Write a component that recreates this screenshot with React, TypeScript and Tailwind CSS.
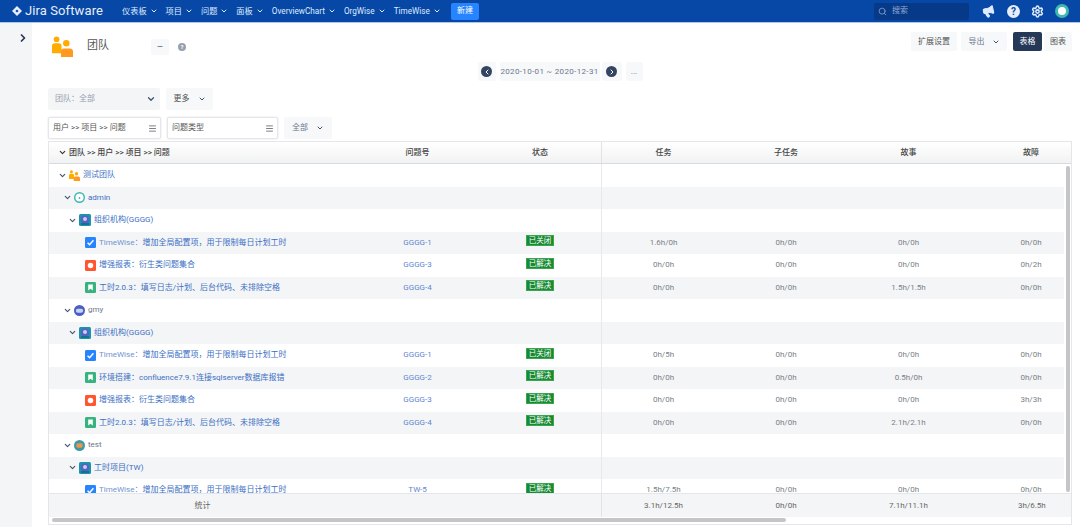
import { ChevronDown, ChevronLeft, ChevronRight, Menu, Search, Settings, Megaphone } from "lucide-react";

type Kind = "task" | "bug" | "story";

interface Row {
  level: number;
  label: string;
  prefix?: string;
  icon?: "team" | "admin" | "gmy" | "test" | "project";
  kind?: Kind;
  issue?: string;
  status?: string;
  values?: string[];
  muted?: boolean;
}

const navItems = ["仪表板", "项目", "问题", "面板", "OverviewChart", "OrgWise", "TimeWise"];

const rows: Row[] = [
  { level: 0, label: "测试团队", icon: "team" },
  { level: 1, label: "admin", icon: "admin" },
  { level: 2, label: "组织机构(GGGG)", icon: "project" },
  { level: 3, kind: "task", prefix: "TimeWise：", label: "增加全局配置项，用于限制每日计划工时", issue: "GGGG-1", status: "已关闭", values: ["1.6h/0h", "0h/0h", "0h/0h", "0h/0h"] },
  { level: 3, kind: "bug", label: "增强报表：衍生类问题集合", issue: "GGGG-3", status: "已解决", values: ["0h/0h", "0h/0h", "0h/0h", "0h/2h"] },
  { level: 3, kind: "story", label: "工时2.0.3：填写日志/计划、后台代码、未排除空格", issue: "GGGG-4", status: "已解决", values: ["0h/0h", "0h/0h", "1.5h/1.5h", "0h/0h"] },
  { level: 1, label: "gmy", icon: "gmy", muted: true },
  { level: 2, label: "组织机构(GGGG)", icon: "project" },
  { level: 3, kind: "task", prefix: "TimeWise：", label: "增加全局配置项，用于限制每日计划工时", issue: "GGGG-1", status: "已关闭", values: ["0h/5h", "0h/0h", "0h/0h", "0h/0h"] },
  { level: 3, kind: "story", label: "环境搭建：confluence7.9.1连接sqlserver数据库报错", issue: "GGGG-2", status: "已解决", values: ["0h/0h", "0h/0h", "0.5h/0h", "0h/0h"] },
  { level: 3, kind: "bug", label: "增强报表：衍生类问题集合", issue: "GGGG-3", status: "已解决", values: ["0h/0h", "0h/0h", "0h/0h", "3h/3h"] },
  { level: 3, kind: "story", label: "工时2.0.3：填写日志/计划、后台代码、未排除空格", issue: "GGGG-4", status: "已解决", values: ["0h/0h", "0h/0h", "2.1h/2.1h", "0h/0h"] },
  { level: 1, label: "test", icon: "test", muted: true },
  { level: 2, label: "工时项目(TW)", icon: "project" },
  { level: 3, kind: "task", prefix: "TimeWise：", label: "增加全局配置项，用于限制每日计划工时", issue: "TW-5", status: "已解决", values: ["1.5h/7.5h", "0h/0h", "0h/0h", "0h/0h"] },
];

const indent: Record<number, string> = {
  0: "pl-[9px]",
  1: "pl-[14px]",
  2: "pl-[19px]",
  3: "pl-[36px]",
};

function TeamIcon({ size }: { size: number }) {
  return (
    <svg width={size} height={size} viewBox="0 0 22 22" className="shrink-0">
      <circle cx="4.8" cy="3.4" r="3" fill="#ffab00" />
      <path d="M0 18v-7.5a3 3 0 0 1 3-3h4a3 3 0 0 1 3 3V18z" fill="#ffab00" />
      <circle cx="15" cy="7.6" r="3.4" fill="#ffab00" />
      <path d="M9.4 22v-6a3.2 3.2 0 0 1 3.2-3h5.8a3.4 3.4 0 0 1 3.6 3v6z" fill="#ff991f" />
    </svg>
  );
}

function Avatar({ type }: { type: "admin" | "gmy" | "test" }) {
  const ring = type === "admin" ? "#3fb8af" : type === "gmy" ? "#4a5fc1" : "#3f9aa8";
  return (
    <svg width="11" height="11" viewBox="0 0 12 12" className="shrink-0">
      <circle cx="6" cy="6" r="6" fill={ring} />
      {type === "admin" && <circle cx="6" cy="6" r="4.4" fill="#fff" />}
      {type === "admin" && <circle cx="6" cy="6.5" r="1" fill="#3fb8af" />}
      {type === "gmy" && <rect x="2" y="4" width="8" height="4.5" rx="2.2" fill="#c7d2f5" />}
      {type === "test" && <rect x="2.5" y="3.5" width="7" height="5" rx="2" fill="#f0954a" />}
    </svg>
  );
}

function ProjectIcon() {
  return (
    <svg width="12" height="12" viewBox="0 0 12 12" className="shrink-0">
      <rect width="12" height="12" rx="1.5" fill="#1c93ad" />
      <circle cx="6" cy="5.4" r="4" fill="#5a5fc4" />
      <circle cx="6" cy="5" r="2" fill="#c9cdf2" />
      <rect x="2" y="9.4" width="8" height="1.2" fill="#0b5f78" />
    </svg>
  );
}

function KindIcon({ kind }: { kind: Kind }) {
  if (kind === "task") {
    return (
      <svg width="11" height="11" viewBox="0 0 12 12" className="shrink-0">
        <rect width="12" height="12" rx="1.5" fill="#2684ff" />
        <path d="M2.8 6.2 5 8.4l4.2-4.8" stroke="#fff" strokeWidth="1.6" fill="none" />
      </svg>
    );
  }
  if (kind === "bug") {
    return (
      <svg width="11" height="11" viewBox="0 0 12 12" className="shrink-0">
        <rect width="12" height="12" rx="1.5" fill="#ff5630" />
        <circle cx="6" cy="6" r="3" fill="#fff" />
      </svg>
    );
  }
  return (
    <svg width="11" height="11" viewBox="0 0 12 12" className="shrink-0">
      <rect width="12" height="12" rx="1.5" fill="#36b37e" />
      <path d="M3.5 2.8h5v6.4L6 7.4 3.5 9.2z" fill="#fff" />
    </svg>
  );
}

function RowIcon({ row }: { row: Row }) {
  if (row.kind) return <KindIcon kind={row.kind} />;
  if (row.icon === "team") return <TeamIcon size={11} />;
  if (row.icon === "project") return <ProjectIcon />;
  if (row.icon) return <Avatar type={row.icon} />;
  return null;
}

function GhostButton({ children, className = "" }: { children: React.ReactNode; className?: string }) {
  return (
    <div className={`flex items-center justify-center rounded-[2px] bg-[#f7f8f9] text-[8px] text-[#6b778c] ${className}`}>
      {children}
    </div>
  );
}

function TreeSelect({ label, className }: { label: string; className: string }) {
  return (
    <div className={`flex h-[22px] items-center justify-between rounded-[2px] border border-[#e4e6ea] bg-white pl-[4px] pr-[3px] text-[8px] text-[#555] shadow-[0_0_2px_#ddd] ${className}`}>
      <span>{label}</span>
      <Menu size={9} strokeWidth={2} className="text-[#555]" />
    </div>
  );
}

export default function App() {
  return (
    <div className="flex h-[527px] w-[1080px] flex-col overflow-hidden bg-white font-['Roboto','Noto_Sans_CJK_SC',sans-serif] text-[8px]">
      {/* Top nav */}
      <header className="flex h-[23px] shrink-0 items-center border-b border-[#a9c8ee] bg-[#0747a6] pl-[12px] pr-[11px] text-[#deebff]">
        <svg width="10" height="10" viewBox="0 0 10 10" className="mr-[3px]">
          <path d="M5 0 10 5 5 10 0 5z" fill="#e6eefb" />
          <path d="M5 3.4 6.6 5 5 6.6 3.4 5z" fill="#0747a6" />
        </svg>
        <span className="w-[97px] text-[13px] tracking-[0.1px] text-[#e6eefb]">Jira Software</span>
        {navItems.map((item) => (
          <div key={item} className="mr-[8px] flex items-center gap-[3px] text-[8.2px]">
            <span>{item}</span>
            <ChevronDown size={8} strokeWidth={3} />
          </div>
        ))}
        <div className="ml-[2px] flex h-[17px] w-[28px] items-center justify-center rounded-[2px] bg-[#2684ff] text-[8px] text-white">新建</div>
        <div className="ml-auto mr-[13px] flex h-[17px] w-[95px] items-center gap-[5px] rounded-[2px] bg-[#063a88] pl-[4px] text-[#8fa8d0]">
          <Search size={9} strokeWidth={2} />
          <span>搜索</span>
        </div>
        <Megaphone size={13} fill="#deebff" className="mr-[12px] -rotate-12" />
        <div className="mr-[11px] flex h-[13px] w-[13px] items-center justify-center rounded-full bg-[#e6eefb] text-[10px] font-bold text-[#0747a6]">?</div>
        <Settings size={13} strokeWidth={2.8} className="mr-[11px]" />
        <div className="flex h-[14px] w-[14px] items-center justify-center rounded-full bg-[#3fb8af]">
          <div className="h-[8px] w-[8px] rounded-full bg-white" />
        </div>
      </header>

      <div className="flex min-h-0 flex-1">
        {/* Collapsed sidebar */}
        <aside className="w-[32px] shrink-0 bg-[#f4f5f7] pl-[17px] pt-[9px] text-[#253858]">
          <ChevronRight size={12} strokeWidth={3.5} />
        </aside>

        <main className="min-w-0 flex-1 pl-[16px] pr-[8px]">
          {/* Title row */}
          <div className="flex h-[39px] items-start justify-between">
            <div className="flex items-center pl-[4px] pt-[13px]">
              <TeamIcon size={21} />
              <span className="ml-[14px] w-[64px] text-[11px] text-[#555]">团队</span>
              <GhostButton className="h-[16px] w-[18px] text-[10px]">–</GhostButton>
              <div className="ml-[9px] flex h-[8px] w-[8px] items-center justify-center rounded-full bg-[#97a0af] text-[6px] font-bold text-white">?</div>
            </div>
            <div className="flex items-center pt-[9px]">
              <GhostButton className="h-[19px] w-[46px] text-[#555]">扩展设置</GhostButton>
              <GhostButton className="ml-[4px] h-[19px] w-[46px] gap-[7px]">
                导出 <ChevronDown size={8} strokeWidth={3} className="text-[#42526e]" />
              </GhostButton>
              <div className="ml-[6px] flex h-[19px] w-[29px] items-center justify-center rounded-[2px] bg-[#253858] text-white">表格</div>
              <GhostButton className="ml-[2px] h-[19px] w-[28px] text-[#555]">图表</GhostButton>
            </div>
          </div>

          {/* Date row */}
          <div className="flex h-[19px] items-center justify-center">
            <GhostButton className="h-[19px] w-[18px]">
              <span className="flex h-[11px] w-[11px] items-center justify-center rounded-full bg-[#344563] text-white">
                <ChevronLeft size={8} strokeWidth={3} />
              </span>
            </GhostButton>
            <GhostButton className="ml-[4px] h-[19px] w-[100px] tracking-[0.35px]">2020-10-01 ~ 2020-12-31</GhostButton>
            <GhostButton className="ml-[2px] h-[19px] w-[20px]">
              <span className="flex h-[11px] w-[11px] items-center justify-center rounded-full bg-[#344563] text-white">
                <ChevronRight size={8} strokeWidth={3} />
              </span>
            </GhostButton>
            <GhostButton className="ml-[4px] h-[19px] w-[17px]">...</GhostButton>
          </div>

          {/* Filters */}
          <div className="mt-[7px] flex h-[22px] gap-[6px]">
            <div className="flex w-[112px] items-center justify-between rounded-[2px] bg-[#f4f5f7] pl-[7px] pr-[4px] text-[#97a0af]">
              <span>团队：全部</span>
              <ChevronDown size={10} strokeWidth={3} className="text-[#42526e]" />
            </div>
            <GhostButton className="w-[47px] gap-[8px] text-[#555]">
              更多 <ChevronDown size={8} strokeWidth={3} className="text-[#42526e]" />
            </GhostButton>
          </div>
          <div className="mt-[7px] flex h-[22px] gap-[6px]">
            <TreeSelect label="用户 >> 项目 >> 问题" className="w-[113px]" />
            <TreeSelect label="问题类型" className="w-[111px]" />
            <GhostButton className="w-[48px] gap-[8px]">
              全部 <ChevronDown size={8} strokeWidth={3} className="text-[#42526e]" />
            </GhostButton>
          </div>

          {/* Table */}
          <section className="mt-[2px] h-[384px] border border-[#e4e6ea]">
            <div className="grid h-[22px] grid-cols-[307px_123px_123px_123px_122px_123px_1fr] items-center border-b border-[#d8dadd] bg-gradient-to-b from-white to-[#f1f2f3] font-medium text-[#444]">
              <div className="flex items-center gap-[2px] pl-[9px]">
                <ChevronDown size={9} strokeWidth={3} className="text-[#333]" />
                <span>团队 &gt;&gt; 用户 &gt;&gt; 项目 &gt;&gt; 问题</span>
              </div>
              <div className="text-center">问题号</div>
              <div className="flex h-full items-center justify-center border-r border-[#e1e3e6]">状态</div>
              <div className="text-center">任务</div>
              <div className="text-center">子任务</div>
              <div className="text-center">故事</div>
              <div className="pl-[53px]">故障</div>
            </div>

            <div className="relative h-[330px] overflow-hidden border-b border-[#e4e6ea]">
              {rows.map((row, i) => (
                <div
                  key={i}
                  className={`grid h-[22.5px] w-[1015px] grid-cols-[307px_123px_123px_123px_122px_123px_1fr] items-center ${i % 2 === 1 ? "bg-[#f4f5f7]" : "bg-white"}`}
                >
                  <div className={`flex items-center gap-[2px] text-[#3b6fc4] ${indent[row.level]}`}>
                    {row.level < 3 && <ChevronDown size={9} strokeWidth={3} className="shrink-0 text-[#42526e]" />}
                    <RowIcon row={row} />
                    <span className={`ml-[1px] whitespace-nowrap ${row.muted ? "text-[#6b778c]" : ""}`}>
                      {row.prefix && <span className="text-[#6f93cf]">{row.prefix}</span>}
                      {row.label}
                    </span>
                  </div>
                  <div className="text-center text-[#5f86cf]">{row.issue}</div>
                  <div className="flex h-full items-center justify-center border-r border-[#e8e9ec]">
                    {row.status && (
                      <span className="-mt-[4px] flex h-[11px] w-[28px] items-center justify-center border border-[#37a64f] bg-[#188a33] text-[7.5px] text-white">
                        {row.status}
                      </span>
                    )}
                  </div>
                  {(row.values ?? ["", "", "", ""]).map((v, j) => (
                    <div key={j} className={`text-center text-[#7a7f87] ${j === 3 ? "pl-[28px]" : ""}`}>{v}</div>
                  ))}
                </div>
              ))}
              <div className="absolute right-[1px] top-[2px] h-[326px] w-[4px] rounded-full bg-[#c4c5c7]" />
            </div>

            <div className="grid h-[23px] grid-cols-[307px_123px_123px_123px_122px_123px_1fr] items-center bg-[#f4f5f6] text-[#666]">
              <div className="text-center">统计</div>
              <div />
              <div className="h-full border-r border-[#e1e3e6]" />
              <div className="text-center">3.1h/12.5h</div>
              <div className="text-center">0h/0h</div>
              <div className="text-center">7.1h/11.1h</div>
              <div className="pl-[48px]">3h/6.5h</div>
            </div>
            <div className="pl-[3px] pt-[1px]">
              <div className="h-[4px] w-[734px] rounded-full bg-[#c4c5c7]" />
            </div>
          </section>
        </main>
      </div>
    </div>
  );
}
